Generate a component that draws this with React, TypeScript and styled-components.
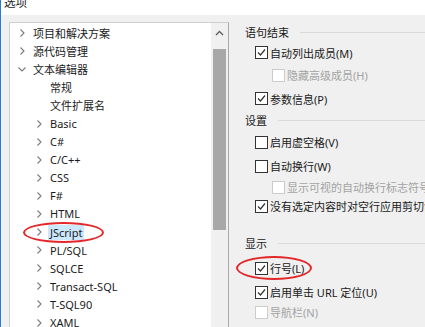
import styled, { createGlobalStyle } from "styled-components";

const GlobalStyle = createGlobalStyle`
  html, body {
    margin: 0;
    padding: 0;
    background: #f0f0f0;
  }
  body {
    font-family: "Noto Sans", "Noto Sans CJK SC", sans-serif;
    font-size: 11px;
    color: #1a1a1a;
  }
`;

type TreeItem = {
  label: string;
  level: number;
  arrow?: "right" | "down";
  selected?: boolean;
};

type CheckItem = {
  kind: "check";
  label: string;
  level: number;
  checked?: boolean;
  disabled?: boolean;
  h: number;
};

type GroupItem = {
  kind: "group";
  label: string;
  h: number;
};

const treeData: TreeItem[] = [
  { label: "项目和解决方案", level: 0, arrow: "right" },
  { label: "源代码管理", level: 0, arrow: "right" },
  { label: "文本编辑器", level: 0, arrow: "down" },
  { label: "常规", level: 1 },
  { label: "文件扩展名", level: 1 },
  { label: "Basic", level: 1, arrow: "right" },
  { label: "C#", level: 1, arrow: "right" },
  { label: "C/C++", level: 1, arrow: "right" },
  { label: "CSS", level: 1, arrow: "right" },
  { label: "F#", level: 1, arrow: "right" },
  { label: "HTML", level: 1, arrow: "right" },
  { label: "JScript", level: 1, arrow: "right", selected: true },
  { label: "PL/SQL", level: 1, arrow: "right" },
  { label: "SQLCE", level: 1, arrow: "right" },
  { label: "Transact-SQL", level: 1, arrow: "right" },
  { label: "T-SQL90", level: 1, arrow: "right" },
  { label: "XAML", level: 1, arrow: "right" },
];

const options: (CheckItem | GroupItem)[] = [
  { kind: "group", label: "语句结束", h: 20 },
  { kind: "check", label: "自动列出成员(M)", level: 0, checked: true, h: 21 },
  { kind: "check", label: "隐藏高级成员(H)", level: 1, disabled: true, h: 24 },
  { kind: "check", label: "参数信息(P)", level: 0, checked: true, h: 23 },
  { kind: "group", label: "设置", h: 20 },
  { kind: "check", label: "启用虚空格(V)", level: 0, h: 24 },
  { kind: "check", label: "自动换行(W)", level: 0, h: 24 },
  { kind: "check", label: "显示可视的自动换行标志符号", level: 1, disabled: true, h: 18 },
  { kind: "check", label: "没有选定内容时对空行应用剪切命令", level: 0, checked: true, h: 20 },
  { kind: "group", label: "", h: 16 },
  { kind: "group", label: "显示", h: 22 },
  { kind: "check", label: "行号(L)", level: 0, checked: true, h: 28 },
  { kind: "check", label: "启用单击 URL 定位(U)", level: 0, checked: true, h: 20 },
  { kind: "check", label: "导航栏(N)", level: 0, disabled: true, h: 20 },
];

const Window = styled.div`
  position: relative;
  width: 424px;
  height: 327px;
  border-left: 1px solid #2b7bd3;
  display: flex;
  flex-direction: column;
  overflow: hidden;
`;

const TitleBar = styled.div`
  height: 15px;
  flex: none;
  background: #ffffff;
  line-height: 6px;
  padding-left: 3px;
  font-size: 11.5px;
  color: #1a1a1a;
  overflow: hidden;
`;

const Content = styled.div`
  flex: 1;
  display: flex;
  padding: 7px 0 0 8px;
  min-height: 0;
`;

const Tree = styled.div`
  width: 218px;
  flex: none;
  height: 330px;
  border: 1px solid #cfcfcf;
  border-right-color: #a9a9a9;
  background: #ffffff;
  display: flex;
`;

const TreeList = styled.div`
  flex: 1;
  padding-top: 1px;
`;

const TreeRow = styled.div<{ $level: number }>`
  height: 18.1px;
  display: flex;
  align-items: center;
  padding-left: ${(p) => 7 + p.$level * 17}px;
  white-space: nowrap;
`;

const ArrowBox = styled.span`
  width: 10px;
  height: 10px;
  flex: none;
  display: flex;
  margin-right: 6px;
`;

const TreeText = styled.span<{ $selected?: boolean }>`
  display: inline-block;
  height: 15px;
  line-height: 15px;
  padding: 0 2px;
  margin-left: -2px;
  background: ${(p) => (p.$selected ? "#cce8ff" : "transparent")};
`;

const ScrollBar = styled.div`
  width: 17px;
  flex: none;
  background: #f0f0f0;
  display: flex;
  flex-direction: column;
  align-items: center;
`;

const ScrollArrow = styled.div`
  height: 20px;
  width: 17px;
  display: flex;
  align-items: center;
  justify-content: center;
`;

const Thumb = styled.div`
  margin-top: 6px;
  width: 13px;
  height: 181px;
  background: #a8a8a8;
`;

const RightPane = styled.div`
  flex: 1;
  min-width: 0;
  padding-left: 16px;
  overflow: hidden;
`;

const GroupRow = styled.div<{ $h: number }>`
  height: ${(p) => p.$h}px;
  display: flex;
  align-items: center;
  white-space: nowrap;
`;

const GroupLine = styled.div`
  flex: 1;
  height: 1px;
  margin-left: 11px;
  background: #dadada;
`;

const CheckRow = styled.div<{ $h: number; $level: number; $disabled?: boolean }>`
  height: ${(p) => p.$h}px;
  display: flex;
  align-items: center;
  padding-left: ${(p) => 10 + p.$level * 17}px;
  white-space: nowrap;
  color: ${(p) => (p.$disabled ? "#a3a3a3" : "#1a1a1a")};
`;

const Box = styled.span<{ $disabled?: boolean }>`
  width: 11px;
  height: 11px;
  flex: none;
  border: 1px solid ${(p) => (p.$disabled ? "#cccccc" : "#333333")};
  background: #ffffff;
  margin-right: 2px;
  display: flex;
  align-items: center;
  justify-content: center;
`;

const Circle = styled.div`
  position: absolute;
  border: 2px solid #e3282c;
  border-radius: 50%;
  pointer-events: none;
`;

const Chevron = ({ dir }: { dir?: "right" | "down" }) => {
  if (!dir) return <ArrowBox />;
  return (
    <ArrowBox>
      <svg width="10" height="10" viewBox="0 0 10 10">
        <polyline
          points={dir === "right" ? "3.5,1.5 7,5 3.5,8.5" : "1.5,3.5 5,7 8.5,3.5"}
          fill="none"
          stroke="#7b7b7b"
          strokeWidth="1.1"
        />
      </svg>
    </ArrowBox>
  );
};

const CheckBox = ({ checked, disabled }: { checked?: boolean; disabled?: boolean }) => (
  <Box $disabled={disabled}>
    {checked && (
      <svg width="9" height="9" viewBox="0 0 9 9">
        <polyline points="1,4.5 3.5,7 8,1.5" fill="none" stroke="#333333" strokeWidth="1.2" />
      </svg>
    )}
  </Box>
);

export default function App() {
  return (
    <>
      <GlobalStyle />
      <Window>
        <TitleBar>选项</TitleBar>
        <Content>
          <Tree>
            <TreeList>
              {treeData.map((el, index) => (
                <TreeRow $level={el.level} key={index}>
                  <Chevron dir={el.arrow} />
                  <TreeText $selected={el.selected}>{el.label}</TreeText>
                </TreeRow>
              ))}
            </TreeList>
            <ScrollBar>
              <ScrollArrow>
                <svg width="9" height="6" viewBox="0 0 9 6">
                  <polyline points="1,5 4.5,1.5 8,5" fill="none" stroke="#606060" strokeWidth="1.4" />
                </svg>
              </ScrollArrow>
              <Thumb />
            </ScrollBar>
          </Tree>
          <RightPane>
            {options.map((el, index) =>
              el.kind === "group" ? (
                <GroupRow $h={el.h} key={index}>
                  {el.label && (
                    <>
                      <span>{el.label}</span>
                      <GroupLine />
                    </>
                  )}
                </GroupRow>
              ) : (
                <CheckRow $h={el.h} $level={el.level} $disabled={el.disabled} key={index}>
                  <CheckBox checked={el.checked} disabled={el.disabled} />
                  <span>{el.label}</span>
                </CheckRow>
              )
            )}
          </RightPane>
        </Content>
        <Circle style={{ left: 22, top: 222, width: 77, height: 17 }} />
        <Circle style={{ left: 235, top: 256, width: 72, height: 20 }} />
      </Window>
    </>
  );
}
